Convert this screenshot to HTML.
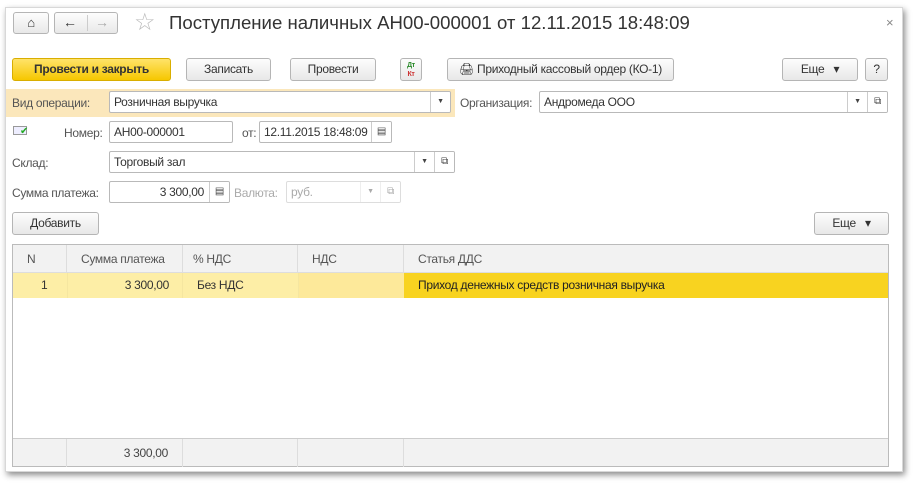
<!DOCTYPE html>
<html><head><meta charset="utf-8"><style>
*{box-sizing:border-box;margin:0;padding:0}
body{width:914px;height:484px;background:#fff;font-family:"Liberation Sans",sans-serif;font-size:12px;letter-spacing:-0.3px;color:#333;position:relative;overflow:hidden}
.win{position:absolute;left:5px;top:7px;width:898px;height:465px;background:#fff;border:1px solid #d8d8d8;box-shadow:2px 3px 6px rgba(0,0,0,.45)}
.a{position:absolute;white-space:nowrap}
.btn{position:absolute;height:23px;border:1px solid #b5b5b5;border-radius:3px;background:linear-gradient(#fdfdfd,#e8e8e8);text-align:center;line-height:21px;color:#333;font-size:12px;white-space:nowrap}
.fld{position:absolute;height:22px;border:1px solid #b9b9b9;border-radius:2px;background:#fff;line-height:20px;padding-left:4px;color:#333;white-space:nowrap;overflow:hidden}
.lbl{position:absolute;color:#555;line-height:20px;margin-top:2px}
.dd{position:absolute;top:0;bottom:0;width:20px;border-left:1px solid #ccc;text-align:center;font-size:7px;line-height:20px;color:#444;background:#fff}
.th{position:absolute;top:0;height:28px;line-height:28px;color:#555;border-right:1px solid #ddd;padding-left:10px}
</style></head><body>
<div class="win">
<div class="btn" style="left:7px;top:4px;width:36px;height:22px;font-size:13px;line-height:20px">&#8962;</div>
<div class="btn" style="left:48px;top:4px;width:64px;height:22px"><span style="position:absolute;left:8px;font-size:14px;line-height:19px">&#8592;</span><span style="position:absolute;left:32px;top:2px;bottom:2px;border-left:1px solid #ccc"></span><span style="position:absolute;left:40px;color:#aaa;font-size:14px;line-height:19px">&#8594;</span></div>
<div class="a" style="left:128px;top:0px;font-size:24px;color:#bbb">&#9734;</div>
<div class="a" style="left:163px;top:4px;font-size:18.6px;letter-spacing:0;color:#333">Поступление наличных АН00-000001 от 12.11.2015 18:48:09</div>
<div class="a" style="left:880px;top:7px;color:#888;font-size:13px">×</div>

<div class="btn" style="left:6px;top:50px;width:159px;background:linear-gradient(#ffe36a,#f6c700);border-color:#d9ae00;font-weight:bold">Провести и закрыть</div>
<div class="btn" style="left:180px;top:50px;width:85px">Записать</div>
<div class="btn" style="left:284px;top:50px;width:86px">Провести</div>
<div class="btn" style="left:394px;top:50px;width:22px;font-size:7px;line-height:9px;padding-top:2px;font-weight:bold"><span style="color:#2a8a2a">Дт</span><br><span style="color:#c33">Кт</span></div>
<div class="btn" style="left:441px;top:50px;width:227px">&#128424; Приходный кассовый ордер (КО-1)</div>
<div class="btn" style="left:776px;top:50px;width:76px">Еще &nbsp;&nbsp;▾</div>
<div class="btn" style="left:859px;top:50px;width:23px">?</div>

<div class="a" style="left:0;top:81px;width:449px;height:28px;background:#fbe7bb"></div>
<div class="lbl" style="left:6px;top:83px">Вид операции:</div>
<div class="fld" style="left:103px;top:83px;width:342px">Розничная выручка<div class="dd" style="right:0">▼</div></div>
<div class="lbl" style="left:454px;top:83px">Организация:</div>
<div class="fld" style="left:533px;top:83px;width:349px">Андромеда ООО<div class="dd" style="right:20px">▼</div><div class="dd" style="right:0;font-size:10px">⧉</div></div>

<div class="a" style="left:7px;top:118px;width:14px;height:9px;border:1px solid #999;background:#eef"></div>
<div class="a" style="left:14px;top:118px;color:#2a2;font-size:10px">✔</div>
<div class="lbl" style="left:58px;top:113px">Номер:</div>
<div class="fld" style="left:103px;top:113px;width:124px">АН00-000001</div>
<div class="lbl" style="left:236px;top:113px">от:</div>
<div class="fld" style="left:253px;top:113px;width:133px">12.11.2015 18:48:09<div class="dd" style="right:0;font-size:10px">▤</div></div>

<div class="lbl" style="left:6px;top:143px">Склад:</div>
<div class="fld" style="left:103px;top:143px;width:346px">Торговый зал<div class="dd" style="right:20px">▼</div><div class="dd" style="right:0;font-size:10px">⧉</div></div>

<div class="lbl" style="left:6px;top:173px">Сумма платежа:</div>
<div class="fld" style="left:103px;top:173px;width:121px;text-align:right;padding-right:25px">3 300,00<div class="dd" style="right:0;font-size:10px">▤</div></div>
<div class="lbl" style="left:228px;top:173px;color:#aaa">Валюта:</div>
<div class="fld" style="left:280px;top:173px;width:115px;color:#aaa;border-color:#ddd">руб.<div class="dd" style="right:20px;color:#aaa;border-color:#eee">▼</div><div class="dd" style="right:0;color:#aaa;border-color:#eee;font-size:10px">⧉</div></div>

<div class="btn" style="left:6px;top:204px;width:87px">Добавить</div>
<div class="btn" style="left:808px;top:204px;width:75px">Еще &nbsp;&nbsp;▾</div>

<div class="a" style="left:6px;top:236px;width:877px;height:223px;border:1px solid #bbb;background:#fff">
 <div class="a" style="left:0;top:0;width:875px;height:28px;background:#f2f2f2;border-bottom:1px solid #ddd">
  <div class="th" style="left:0;width:54px;padding-left:14px">N</div>
  <div class="th" style="left:54px;width:116px;padding-left:14px">Сумма платежа</div>
  <div class="th" style="left:170px;width:115px">% НДС</div>
  <div class="th" style="left:285px;width:106px;padding-left:14px">НДС</div>
  <div class="th" style="left:391px;width:484px;border:0;padding-left:14px">Статья ДДС</div>
 </div>
 <div class="a" style="left:0;top:28px;width:391px;height:25px;background:#fdeea6"></div>
 <div class="a" style="left:54px;top:28px;width:116px;height:25px;border-left:1px solid #f5e6a0;border-right:1px solid #f5e6a0"></div>
 <div class="a" style="left:285px;top:28px;width:106px;height:25px;background:#fde99a;border-left:1px solid #f5e6a0"></div>
 <div class="a" style="left:391px;top:28px;width:484px;height:25px;background:#f8d320"></div>
 <div class="a" style="left:28px;top:33px;color:#333">1</div>
 <div class="a" style="left:54px;top:33px;width:102px;text-align:right">3 300,00</div>
 <div class="a" style="left:184px;top:33px">Без НДС</div>
 <div class="a" style="left:405px;top:33px;color:#222">Приход денежных средств розничная выручка</div>
 <div class="a" style="left:0;top:193px;width:875px;height:28px;background:#f2f2f2;border-top:1px solid #ccc">
  <div class="th" style="left:0;width:54px"></div>
  <div class="th" style="left:54px;width:116px;text-align:right;padding-right:14px;color:#444">3 300,00</div>
  <div class="th" style="left:170px;width:115px"></div>
  <div class="th" style="left:285px;width:106px"></div>
 </div>
</div>
</div>
</body></html>
